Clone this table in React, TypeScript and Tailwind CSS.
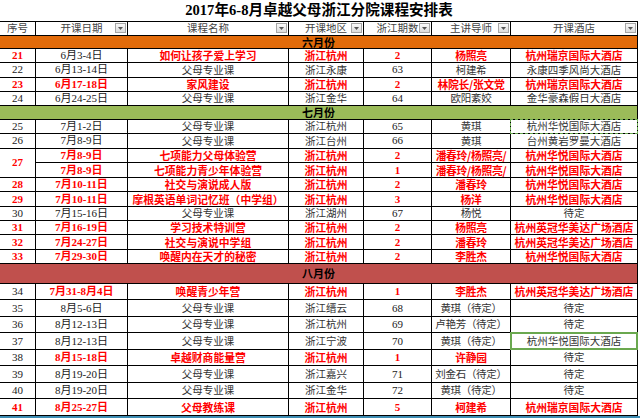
import React from "react";

type Row = {
  n: string;
  date: string;
  course: string;
  region: string;
  qi: string;
  teacher: string;
  hotel: string;
  red?: boolean;
  seqBlack?: boolean;
  dateBlack?: boolean;
  hotelBlack?: boolean;
  mark?: "dash" | "solid";
};

const june: Row[] = [
  { n: "21", date: "6月3-4日", course: "如何让孩子爱上学习", region: "浙江杭州", qi: "2", teacher: "杨照亮", hotel: "杭州瑞京国际大酒店", red: true, dateBlack: true },
  { n: "22", date: "6月13-14日", course: "父母专业课", region: "浙江永康", qi: "63", teacher: "柯建希", hotel: "永康四季风尚大酒店" },
  { n: "23", date: "6月17-18日", course: "家风建设", region: "浙江杭州", qi: "2", teacher: "林院长/张文党", hotel: "杭州瑞京国际大酒店", red: true },
  { n: "24", date: "6月24-25日", course: "父母专业课", region: "浙江金华", qi: "64", teacher: "欧阳紊姣", hotel: "金华豪森假日大酒店" },
];

const julyA: Row[] = [
  { n: "25", date: "7月1-2日", course: "父母专业课", region: "浙江杭州", qi: "65", teacher: "黄琪", hotel: "杭州华悦国际大酒店", mark: "dash" },
  { n: "26", date: "7月8-9日", course: "父母专业课", region: "浙江台州", qi: "66", teacher: "黄琪", hotel: "台州黄岩罗曼大酒店" },
];

const pair: Row[] = [
  { n: "27", date: "7月8-9日", course: "七项能力父母体验营", region: "浙江杭州", qi: "2", teacher: "潘春玲/杨照亮/", hotel: "杭州华悦国际大酒店", red: true },
  { n: "27", date: "7月8-9日", course: "七项能力青少年体验营", region: "浙江杭州", qi: "1", teacher: "潘春玲/杨照亮/", hotel: "杭州华悦国际大酒店", red: true },
];

const julyB: Row[] = [
  { n: "28", date: "7月10-11日", course: "社交与演说成人版", region: "浙江杭州", qi: "2", teacher: "潘春玲", hotel: "杭州华悦国际大酒店", red: true },
  { n: "29", date: "7月10-11日", course: "摩根英语单词记忆班（中学组）", region: "浙江杭州", qi: "3", teacher: "杨洋", hotel: "杭州华悦国际大酒店", red: true },
  { n: "30", date: "7月15-16日", course: "父母专业课", region: "浙江湖州", qi: "67", teacher: "杨悦", hotel: "待定" },
  { n: "31", date: "7月16-19日", course: "学习技术特训营", region: "浙江杭州", qi: "2", teacher: "杨照亮", hotel: "杭州英冠华美达广场酒店", red: true },
  { n: "32", date: "7月24-27日", course: "社交与演说中学组", region: "浙江杭州", qi: "2", teacher: "潘春玲", hotel: "杭州英冠华美达广场酒店", red: true },
  { n: "33", date: "7月29-30日", course: "唤醒内在天才的秘密", region: "浙江杭州", qi: "2", teacher: "李胜杰", hotel: "杭州华悦国际大酒店", red: true },
];

const august: Row[] = [
  { n: "34", date: "7月31-8月4日", course: "唤醒青少年营", region: "浙江杭州", qi: "1", teacher: "李胜杰", hotel: "杭州英冠华美达广场酒店", red: true, seqBlack: true },
  { n: "35", date: "8月5-6日", course: "父母专业课", region: "浙江缙云", qi: "68", teacher: "黄琪（待定）", hotel: "待定" },
  { n: "36", date: "8月12-13日", course: "父母专业课", region: "浙江杭州", qi: "69", teacher: "卢艳芳（待定）", hotel: "待定" },
  { n: "37", date: "8月12-13日", course: "父母专业课", region: "浙江宁波", qi: "70", teacher: "黄琪（待定）", hotel: "杭州华悦国际大酒店", mark: "solid" },
  { n: "38", date: "8月15-18日", course: "卓越财商能量营", region: "浙江杭州", qi: "1", teacher: "许静园", hotel: "待定", red: true, seqBlack: true, hotelBlack: true },
  { n: "39", date: "8月19-20日", course: "父母专业课", region: "浙江嘉兴", qi: "71", teacher: "刘金石（待定）", hotel: "待定" },
  { n: "40", date: "8月19-20日", course: "父母专业课", region: "浙江金华", qi: "72", teacher: "黄琪（待定）", hotel: "待定" },
  { n: "41", date: "8月25-27日", course: "父母教练课", region: "浙江杭州", qi: "5", teacher: "柯建希", hotel: "杭州瑞京国际大酒店", red: true },
];

const cell = "flex items-center justify-center border-r border-black whitespace-nowrap leading-none";
const serifRed = "font-['Liberation_Serif','Noto_Sans_CJK_SC',serif] text-[11px] font-bold text-[#ff0000]";
const serifBlack = "font-['Liberation_Serif','Noto_Sans_CJK_SC',serif] text-[11px] text-[#1a1a1a]";
const sansRed = "font-['Noto_Sans_CJK_SC',sans-serif] text-[10.8px] font-bold text-[#ff0000]";
const sansBlack = "font-['Noto_Sans_CJK_SC',sans-serif] text-[10.5px] text-[#333]";

function Cells({ r }: { r: Row }) {
  const red = !!r.red;
  const hotelRed = red && !r.hotelBlack;
  return (
    <>
      <div className={`${cell} ${red && !r.dateBlack ? serifRed : serifBlack}`}>{r.date}</div>
      <div className={`${cell} ${red ? sansRed : sansBlack}`}>{r.course}</div>
      <div className={`${cell} ${red ? sansRed : sansBlack}`}>{r.region}</div>
      <div className={`${cell} ${red ? serifRed : serifBlack}`}>{r.qi}</div>
      <div className={`${cell} ${red ? sansRed : sansBlack} tracking-[-0.3px]`}>{r.teacher}</div>
      <div className="relative border-r border-black">
        <div className={`${cell} h-full border-r-0 ${hotelRed ? sansRed : sansBlack}`}>{r.hotel}</div>
        {r.mark === "dash" && (
          <div className="absolute -inset-px border border-dashed border-[#6aa84f]" />
        )}
        {r.mark === "solid" && (
          <div className="absolute -inset-px border-2 border-[#6aa84f]" />
        )}
      </div>
    </>
  );
}

function DataRow({ r, h }: { r: Row; h: string }) {
  const seqRed = r.red && !r.seqBlack;
  return (
    <div className={`grid grid-cols-[36px_92px_161px_75px_68px_79px_127px] border-b border-black ${h}`}>
      <div className={`${cell} ${seqRed ? serifRed : serifBlack}`}>{r.n}</div>
      <Cells r={r} />
    </div>
  );
}

function Band({ label, color, h }: { label: string; color: string; h: string }) {
  return (
    <div className={`flex items-center justify-center border-b border-r border-black ${color} ${h}`}>
      <span className="font-['Noto_Sans_CJK_SC',sans-serif] text-[11px] font-bold text-black leading-none">{label}</span>
    </div>
  );
}

function Filter() {
  return (
    <div className="absolute right-[1px] top-[1px] flex h-[10px] w-[11px] items-center justify-center border border-[#a6a6a6] bg-gradient-to-b from-[#fafafa] to-[#dcdcdc]">
      <svg width="5" height="3" viewBox="0 0 5 3">
        <path d="M0 0h5L2.5 3z" fill="#555" />
      </svg>
    </div>
  );
}

const headers = ["序号", "开课日期", "课程名称", "开课地区", "浙江期数", "主讲导师", "开课酒店"];

export default function App() {
  return (
    <div className="h-[418px] w-[640px] overflow-hidden bg-white">
      <div className="flex h-[21px] items-center justify-center pr-[2px]">
        <span className="font-['Liberation_Serif','Noto_Sans_CJK_SC',serif] text-[14.6px] font-bold text-black leading-none">
          2017年6-8月卓越父母浙江分院课程安排表
        </span>
      </div>
      <div className="w-[638px]">
        <div className="grid h-[15px] grid-cols-[36px_92px_161px_75px_68px_79px_127px] border-y border-black bg-white">
          {headers.map((t, i) => (
            <div key={t} className={`relative ${cell} font-['Noto_Sans_CJK_SC',sans-serif] text-[10.5px] text-[#444]`}>
              {t}
              {i > 0 && <Filter />}
            </div>
          ))}
        </div>
        <Band label="六月份" color="bg-[#e26b0a]" h="h-[13px]" />
        {june.map((r) => (
          <DataRow key={r.n} r={r} h="h-[14.25px]" />
        ))}
        <Band label="七月份" color="bg-[#9bbb59]" h="h-[14px]" />
        {julyA.map((r) => (
          <DataRow key={r.n} r={r} h="h-[14.3px]" />
        ))}
        <div className="flex border-b border-black">
          <div className={`${cell} w-[36px] ${serifRed}`}>27</div>
          <div className="flex flex-col">
            {pair.map((r, i) => (
              <div
                key={i}
                className={`grid h-[14.3px] grid-cols-[92px_161px_75px_68px_79px_127px] ${i === 0 ? "border-b border-black" : ""}`}
              >
                <Cells r={r} />
              </div>
            ))}
          </div>
        </div>
        {julyB.map((r) => (
          <DataRow key={r.n} r={r} h="h-[14.3px]" />
        ))}
        <Band label="八月份" color="bg-[#c0504d]" h="h-[20px]" />
        {august.map((r) => (
          <DataRow key={r.n} r={r} h="h-[16.5px]" />
        ))}
      </div>
      <div className="h-[3px] w-full bg-[#3d8db3]" />
    </div>
  );
}
